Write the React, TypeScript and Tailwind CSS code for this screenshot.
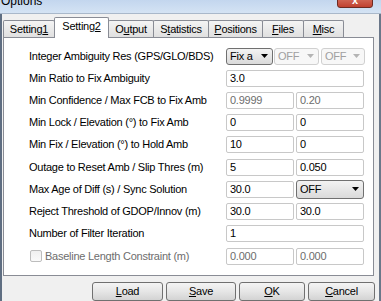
import React from "react";

const tabs = [
  { pre: "Setting", u: "1", post: "", w: "w-[52px]" },
  { pre: "Setting", u: "2", post: "", w: "w-[55px]", active: true },
  { pre: "O", u: "u", post: "tput", w: "w-[46px]" },
  { pre: "S", u: "t", post: "atistics", w: "w-[56px]" },
  { pre: "", u: "P", post: "ositions", w: "w-[55px]" },
  { pre: "", u: "F", post: "iles", w: "w-[42px]" },
  { pre: "", u: "M", post: "isc", w: "w-[41px]" },
];

const Arrow = ({ disabled }: { disabled?: boolean }) => (
  <svg width="7" height="4" viewBox="0 0 7 4" className="shrink-0">
    <polygon points="0,0 7,0 3.5,4" fill={disabled ? "#b4b4b4" : "#000"} />
  </svg>
);

const Edit = ({ value, w, disabled }: { value: string; w: string; disabled?: boolean }) => (
  <div
    className={`h-[17px] ${w} shrink-0 border border-[#c8c8c8] rounded-[2px] bg-white pl-[3px] flex items-center ${
      disabled ? "text-[#6d6d6d]" : "text-black"
    }`}
  >
    {value}
  </div>
);

const Combo = ({ value, w, h, disabled }: { value: string; w: string; h: string; disabled?: boolean }) => (
  <div
    className={`${h} ${w} shrink-0 rounded-[3px] border flex items-center justify-between pl-[3px] pr-[4px] ${
      disabled
        ? "border-[#d0d0d0] bg-[#f7f7f7] text-[#a0a0a0]"
        : "border-[#707070] bg-linear-to-b from-[#f3f3f3] to-[#dadada] text-black"
    }`}
  >
    <span>{value}</span>
    <Arrow disabled={disabled} />
  </div>
);

const Row = ({ label, children, extra }: { label: React.ReactNode; children: React.ReactNode; extra?: string }) => (
  <div className={`h-[22px] flex items-center ${extra ?? ""}`}>
    <div className="w-[197px] shrink-0 pl-[25px] box-content whitespace-nowrap">{label}</div>
    <div className="flex items-center gap-[2px]">{children}</div>
  </div>
);

const Btn = ({ pre, u, post, w }: { pre: string; u: string; post: string; w: string }) => (
  <div
    className={`${w} h-[19px] rounded-[3px] border border-[#707070] bg-linear-to-b from-[#f4f4f4] via-[#e6e6e6] to-[#d3d3d3] flex items-center justify-center text-black`}
  >
    <span>
      {pre}
      <span className="underline underline-offset-[1px]">{u}</span>
      {post}
    </span>
  </div>
);

export default function App() {
  return (
    <div className="w-[381px] h-[301px] overflow-hidden flex flex-col bg-[#f0f0f0] font-['Liberation_Sans',Arial,sans-serif] text-[11px] tracking-[-0.25px] text-black leading-none">
      {/* title bar */}
      <div className="h-[14px] shrink-0 relative bg-linear-to-b from-[#c3d6ee] to-[#d4e3f4] border-b border-[#a9b8ca]">
        <div className="absolute left-[1px] top-[-5px] text-[12px] text-black tracking-normal">Options</div>
        <div className="absolute left-[337px] top-[-6px] w-[36px] h-[14px] rounded-b-[3px] border border-[#6e2a22] bg-linear-to-b from-[#d9796a] to-[#c0402f] flex items-end justify-center">
          <span className="text-white text-[11px] font-bold leading-none mb-[1px]">x</span>
        </div>
      </div>

      <div className="flex-1 flex flex-col border-l-2 border-r-2 border-l-[#5f6e82] border-r-[#6a7789]">
        {/* tabs */}
        <div className="h-[23px] pl-[1px] flex items-end">
          {tabs.map((t, i) =>
            t.active ? (
              <div
                key={i}
                className={`${t.w} -ml-[1px] h-[21px] -mb-[1px] relative z-10 bg-white border border-b-0 border-[#898c95] rounded-t-[2px] flex items-center justify-center pb-[3px]`}
              >
                <span>
                  {t.pre}
                  <span className="underline underline-offset-[1px]">{t.u}</span>
                  {t.post}
                </span>
              </div>
            ) : (
              <div
                key={i}
                className={`${t.w} ${i === 0 ? "" : "-ml-[1px]"} h-[17px] bg-linear-to-b from-[#f4f4f4] to-[#e0e0e0] border border-b-0 border-[#898c95] rounded-t-[2px] flex items-center justify-center`}
              >
                <span>
                  {t.pre}
                  <span className="underline underline-offset-[1px]">{t.u}</span>
                  {t.post}
                </span>
              </div>
            )
          )}
        </div>

        {/* panel */}
        <div className="ml-[1px] w-[371px] h-[239px] bg-white border border-[#898c95] pt-[7px] flex flex-col">
          <Row label="Integer Ambiguity Res (GPS/GLO/BDS)">
            <Combo value="Fix a" w="w-[47px]" h="h-[17px]" />
            <div className="-ml-[1px] flex gap-[2px]">
              <Combo value="OFF" w="w-[45px]" h="h-[17px]" disabled />
              <Combo value="OFF" w="w-[44px]" h="h-[17px]" disabled />
            </div>
          </Row>
          <Row label="Min Ratio to Fix Ambiguity">
            <Edit value="3.0" w="w-[138px]" />
          </Row>
          <Row label="Min Confidence / Max FCB to Fix Amb">
            <Edit value="0.9999" w="w-[68px]" disabled />
            <Edit value="0.20" w="w-[68px]" disabled />
          </Row>
          <Row label="Min Lock / Elevation (°) to Fix Amb">
            <Edit value="0" w="w-[68px]" />
            <Edit value="0" w="w-[68px]" />
          </Row>
          <Row label="Min Fix / Elevation (°) to Hold Amb">
            <Edit value="10" w="w-[68px]" />
            <Edit value="0" w="w-[68px]" />
          </Row>
          <Row label="Outage to Reset Amb / Slip Thres (m)" extra="mt-[1px]">
            <Edit value="5" w="w-[68px]" />
            <Edit value="0.050" w="w-[68px]" />
          </Row>
          <Row label="Max Age of Diff (s) / Sync Solution">
            <Edit value="30.0" w="w-[68px]" />
            <Combo value="OFF" w="w-[68px]" h="h-[19px]" />
          </Row>
          <Row label="Reject Threshold of GDOP/Innov (m)">
            <Edit value="30.0" w="w-[68px]" />
            <Edit value="30.0" w="w-[68px]" />
          </Row>
          <Row label="Number of Filter Iteration">
            <Edit value="1" w="w-[138px]" />
          </Row>
          <Row
            extra="mt-[1px]"
            label={
              <div className="flex items-center gap-[3px] text-[#6d6d6d]">
                <div className="ml-[1px] w-[12px] h-[12px] border border-[#bdbdbd] rounded-[2px] bg-linear-to-b from-[#f0f0f0] to-[#fafafa]" />
                <span>Baseline Length Constraint (m)</span>
              </div>
            }
          >
            <Edit value="0.000" w="w-[68px]" disabled />
            <Edit value="0.000" w="w-[68px]" disabled />
          </Row>
        </div>

        {/* buttons */}
        <div className="mt-[6px] pl-[90px] flex">
          <Btn pre="" u="L" post="oad" w="w-[71px]" />
          <div className="ml-[3px]">
            <Btn pre="" u="S" post="ave" w="w-[70px]" />
          </div>
          <div className="ml-[3px]">
            <Btn pre="" u="O" post="K" w="w-[66px]" />
          </div>
          <div className="ml-[3px]">
            <Btn pre="" u="C" post="ancel" w="w-[67px]" />
          </div>
        </div>
      </div>
    </div>
  );
}
